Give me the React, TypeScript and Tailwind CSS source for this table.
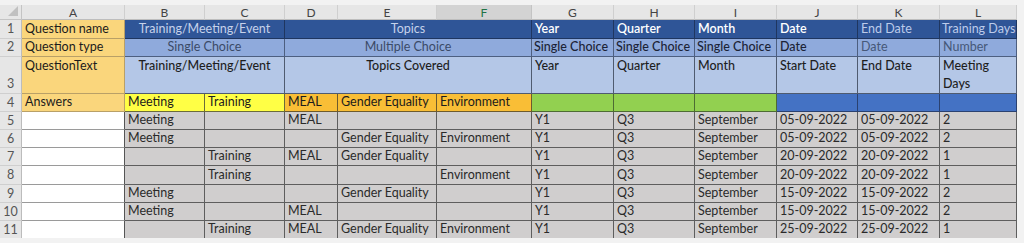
import React from "react";

const font = { fontFamily: "Lato, 'Noto Sans', 'Liberation Sans', sans-serif" };

const GRID =
  "grid grid-cols-[22px_103px_80px_80px_53px_99px_95px_82px_81px_82px_81px_82px_77px] grid-rows-[15px_19px_18px_37px_18px_18px_18px_18px_19px_18px_18px_18px]";

const letters = ["A", "B", "C", "D", "E", "F", "G", "H", "I", "J", "K", "L"];

type Row = string[];

// rows 5..11, columns A..L
const data: Row[] = [
  ["", "Meeting", "", "MEAL", "", "", "Y1", "Q3", "September", "05-09-2022", "05-09-2022", "2"],
  ["", "Meeting", "", "", "Gender Equality", "Environment", "Y1", "Q3", "September", "05-09-2022", "05-09-2022", "2"],
  ["", "", "Training", "MEAL", "Gender Equality", "", "Y1", "Q3", "September", "20-09-2022", "20-09-2022", "1"],
  ["", "", "Training", "", "", "Environment", "Y1", "Q3", "September", "20-09-2022", "20-09-2022", "1"],
  ["", "Meeting", "", "", "Gender Equality", "", "Y1", "Q3", "September", "15-09-2022", "15-09-2022", "2"],
  ["", "Meeting", "", "MEAL", "", "", "Y1", "Q3", "September", "15-09-2022", "15-09-2022", "2"],
  ["", "", "Training", "MEAL", "Gender Equality", "Environment", "Y1", "Q3", "September", "25-09-2022", "25-09-2022", "1"],
];

function RowNum({ n, bottom }: { n: number; bottom?: boolean }) {
  return (
    <div
      className={
        "flex justify-center bg-[#e6e6e6] border-r border-b border-r-[#bcbcbc] border-b-[#cfcfcf] text-[12.5px] leading-[18px] text-[#555] " +
        (bottom ? "items-end" : "items-center")
      }
    >
      {n}
    </div>
  );
}

function Cell({
  className = "",
  children,
}: {
  className?: string;
  children?: React.ReactNode;
}) {
  return (
    <div
      className={
        "flex items-end overflow-hidden whitespace-nowrap border-r border-b px-[3px] text-[12.5px] leading-[18px] " +
        className
      }
    >
      {children}
    </div>
  );
}

export default function App() {
  return (
    <div className="w-[1024px] h-[243px] bg-[#f2f2f2] pt-[5px] pr-[7px]" style={font}>
      <div className="w-[1017px] h-[233px] overflow-hidden bg-white">
        <div className={GRID}>
          {/* column headers */}
          <div className="relative bg-[#e6e6e6] border-r border-b border-[#c4c4c4]">
            <svg className="absolute right-[3px] bottom-[3px]" width="10" height="10" viewBox="0 0 10 10">
              <polygon points="10,0 10,10 0,10" fill="#c0c0c0" />
            </svg>
          </div>
          {letters.map((l) =>
            l === "F" ? (
              <div
                key={l}
                className="flex items-center justify-center bg-[#d3d3d3] border-r border-b border-r-[#c4c4c4] border-b-[#bdbdbd] text-[12px] leading-[15px] text-[#217346]"
              >
                {l}
              </div>
            ) : (
              <div
                key={l}
                className="flex items-center justify-center bg-[#e6e6e6] border-r border-b border-r-[#cfcfcf] border-b-[#bdbdbd] text-[12px] leading-[15px] text-[#444]"
              >
                {l}
              </div>
            )
          )}

          {/* row 1 */}
          <RowNum n={1} bottom />
          <Cell className="bg-[#fad67c] border-[#b9a067] text-[#1c1c1c]">Question name</Cell>
          <Cell className="col-span-2 justify-center bg-[#2f5597] border-[#1f3660] text-[#c6d2ea]">
            Training/Meeting/Event
          </Cell>
          <Cell className="col-span-3 justify-center bg-[#2f5597] border-[#1f3660] text-[#c6d2ea]">Topics</Cell>
          <Cell className="bg-[#2f5597] border-[#1f3660] text-white font-semibold">Year</Cell>
          <Cell className="bg-[#2f5597] border-[#1f3660] text-white font-semibold">Quarter</Cell>
          <Cell className="bg-[#2f5597] border-[#1f3660] text-white font-semibold">Month</Cell>
          <Cell className="bg-[#2f5597] border-[#1f3660] text-white font-semibold">Date</Cell>
          <Cell className="bg-[#2f5597] border-[#1f3660] text-[#bccbea]">End Date</Cell>
          <Cell className="bg-[#2f5597] border-[#1f3660] text-[#bccbea] !pl-[2px]">Training Days</Cell>

          {/* row 2 */}
          <RowNum n={2} bottom />
          <Cell className="bg-[#fad67c] border-[#b9a067] text-[#1c1c1c]">Question type</Cell>
          <Cell className="col-span-2 justify-center bg-[#8faadc] border-[#4d5f80] text-[#3b4a68]">
            Single Choice
          </Cell>
          <Cell className="col-span-3 justify-center bg-[#8faadc] border-[#4d5f80] text-[#3b4a68]">
            Multiple Choice
          </Cell>
          <Cell className="bg-[#8faadc] border-[#4d5f80] text-[#1b2336] font-medium !pl-[2px]">Single Choice</Cell>
          <Cell className="bg-[#8faadc] border-[#4d5f80] text-[#1b2336] font-medium !pl-[2px]">Single Choice</Cell>
          <Cell className="bg-[#8faadc] border-[#4d5f80] text-[#1b2336] font-medium !pl-[2px]">Single Choice</Cell>
          <Cell className="bg-[#8faadc] border-[#4d5f80] text-[#1b2336] font-medium">Date</Cell>
          <Cell className="bg-[#8faadc] border-[#4d5f80] text-[#465878]">Date</Cell>
          <Cell className="bg-[#8faadc] border-[#4d5f80] text-[#465878]">Number</Cell>

          {/* row 3 */}
          <RowNum n={3} bottom />
          <Cell className="!items-start bg-[#fad67c] border-[#b9a067] text-[#1c1c1c]">QuestionText</Cell>
          <Cell className="col-span-2 !items-start justify-center bg-[#b4c7e7] border-[#4f5b70] text-[#1e1e1e] font-medium">
            Training/Meeting/Event
          </Cell>
          <Cell className="col-span-3 !items-start justify-center bg-[#b4c7e7] border-[#4f5b70] text-[#1e1e1e] font-medium">
            Topics Covered
          </Cell>
          <Cell className="!items-start bg-[#b4c7e7] border-[#4f5b70] text-[#1e1e1e] font-medium">Year</Cell>
          <Cell className="!items-start bg-[#b4c7e7] border-[#4f5b70] text-[#1e1e1e] font-medium">Quarter</Cell>
          <Cell className="!items-start bg-[#b4c7e7] border-[#4f5b70] text-[#1e1e1e] font-medium">Month</Cell>
          <Cell className="!items-start bg-[#b4c7e7] border-[#4f5b70] text-[#1e1e1e] font-medium">Start Date</Cell>
          <Cell className="!items-start bg-[#b4c7e7] border-[#4f5b70] text-[#1e1e1e] font-medium">End Date</Cell>
          <Cell className="flex-col !items-start bg-[#b4c7e7] border-[#4f5b70] text-[#1e1e1e] font-medium">
            <span>Meeting</span>
            <span>Days</span>
          </Cell>

          {/* row 4 */}
          <RowNum n={4} />
          <Cell className="bg-[#fad67c] border-[#b9a067] text-[#1c1c1c]">Answers</Cell>
          <Cell className="bg-[#ffff45] border-[#6b6b3a] text-[#1c1c1c]">Meeting</Cell>
          <Cell className="bg-[#ffff45] border-[#6b6b3a] text-[#1c1c1c]">Training</Cell>
          <Cell className="bg-[#f9be36] border-[#6e5a2c] text-[#1c1c1c]">MEAL</Cell>
          <Cell className="bg-[#f9be36] border-[#6e5a2c] text-[#1c1c1c]">Gender Equality</Cell>
          <Cell className="bg-[#f9be36] border-[#6e5a2c] text-[#1c1c1c]">Environment</Cell>
          <Cell className="bg-[#92d050] border-[#4d6b33]" />
          <Cell className="bg-[#92d050] border-[#4d6b33]" />
          <Cell className="bg-[#92d050] border-[#4d6b33]" />
          <Cell className="bg-[#4472c4] border-[#2a4170]" />
          <Cell className="bg-[#4472c4] border-[#2a4170]" />
          <Cell className="bg-[#4472c4] border-[#2a4170]" />

          {/* data rows */}
          {data.map((row, i) => (
            <React.Fragment key={i}>
              <RowNum n={i + 5} />
              {row.map((v, j) =>
                j === 0 ? (
                  <Cell key={j} className="bg-white border-r-[#555] border-b-[#9a9a9a]" />
                ) : (
                  <Cell key={j} className="bg-[#d0cece] border-[#5e5e5e] text-[#2a2a2a]">
                    {v}
                  </Cell>
                )
              )}
            </React.Fragment>
          ))}
        </div>
      </div>
    </div>
  );
}
